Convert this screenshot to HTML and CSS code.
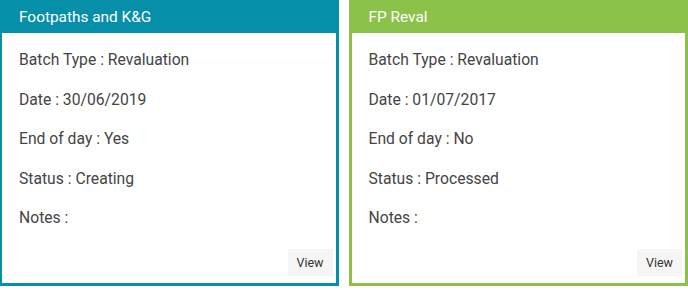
FILE: index.html
```html
<!DOCTYPE html>
<html lang="en">
<head>
    <meta charset="UTF-8">
    <title>Batches</title>
    <link rel="stylesheet" href="styles.css">
</head>
<body>
    <div class="batches">
        <div class="batch teal">
            <div class="batch-head">Footpaths and K&amp;G</div>
            <div class="batch-body">
                <p>Batch Type : Revaluation</p>
                <p>Date : 30/06/2019</p>
                <p>End of day : Yes</p>
                <p>Status : Creating</p>
                <p>Notes :</p>
            </div>
            <div class="batch-foot"><button class="btn-view">View</button></div>
        </div>
        <div class="batch green">
            <div class="batch-head">FP Reval</div>
            <div class="batch-body">
                <p>Batch Type : Revaluation</p>
                <p>Date : 01/07/2017</p>
                <p>End of day : No</p>
                <p>Status : Processed</p>
                <p>Notes :</p>
            </div>
            <div class="batch-foot"><button class="btn-view">View</button></div>
        </div>
    </div>
</body>
</html>
```

FILE: styles.css
```css
*{
    padding:0;
    margin:0;
    box-sizing:border-box;
}
body{
    background:#fff;
    font-family:Roboto, "Liberation Sans", sans-serif;
    color:#444;
}
.batches{
    display:flex;
    gap:10px;
    margin-left:-1px;
    width:689px;
}
.batch{
    flex:1;
    height:286px;
    border:3px solid;
    border-top:0;
    display:flex;
    flex-direction:column;
}
.teal{
    border-color:#058fa8;
}
.green{
    border-color:#8bc34a;
}
.batch-head{
    height:33px;
    margin:0 -3px;
    padding:0 0 0 20px;
    line-height:34px;
    font-size:15.4px;
    color:#fff;
}
.teal .batch-head{
    background:#058fa8;
}
.green .batch-head{
    background:#8bc34a;
}
.batch-body{
    padding:16px 17px 0;
    display:flex;
    flex-direction:column;
    gap:17.5px;
}
.batch-body p{
    line-height:22px;
    font-size:15.7px;
}
.batch-foot{
    margin-top:auto;
    padding:0 3px 7px 0;
    display:flex;
    justify-content:flex-end;
}
.btn-view{
    background:#f5f5f5;
    border:0;
    width:45px;
    height:27px;
    font-family:Roboto, "Liberation Sans", sans-serif;
    font-size:12.5px;
    color:#333;
}
```
